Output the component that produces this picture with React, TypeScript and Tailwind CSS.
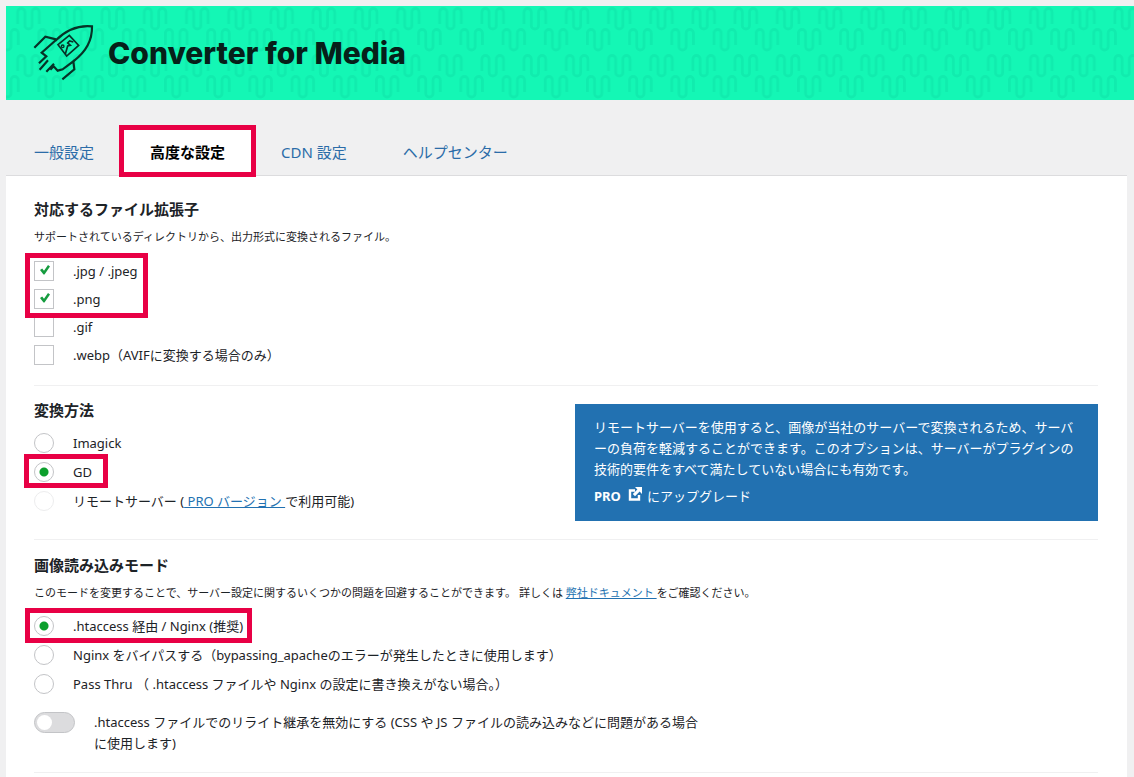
import { useState } from "react";
import type { ReactNode } from "react";

const tabs = ["一般設定", "高度な設定", "CDN 設定", "ヘルプセンター"];

const extensions = [
  { id: "jpg", label: ".jpg / .jpeg" },
  { id: "png", label: ".png" },
  { id: "gif", label: ".gif" },
  { id: "webp", label: ".webp（AVIFに変換する場合のみ）" },
];

const wave =
  "M11.7 18V6.1a3.6 3.6 0 0 1 7.2 0V19.4a3.6 3.6 0 0 0 7.2 0V6.1a3.6 3.6 0 0 1 7.2 0V18";

function Waves() {
  return (
    <svg className="absolute inset-0 h-full w-full" aria-hidden="true">
      <defs>
        <pattern id="waves" width="42.2" height="47" patternUnits="userSpaceOnUse">
          <g fill="none" stroke="#11ecae" strokeWidth="2.8">
            <path d={wave} />
            <path d={wave} transform="translate(21.1 21)" />
            <path d={wave} transform="translate(-21.1 21)" />
          </g>
        </pattern>
      </defs>
      <rect width="100%" height="100%" fill="url(#waves)" />
    </svg>
  );
}

function Rocket() {
  return (
    <svg
      className="h-[66px] w-[66px]"
      viewBox="0 0 198 198"
      fill="none"
      stroke="#063327"
      strokeWidth="6.5"
      aria-hidden="true"
    >
      <path d="M76 62C108 30 148 15 186 19C187 58 168 96 130 124" />
      <path d="M13 83L46 50L78 58" />
      <path d="M78 60L35 98L49 109L27 130" />
      <path d="M54 121L29 149M72 131L49 155" />
      <path d="M61 149L71 139L83 152L98 148L130 124L133 148L97 178" />
      <path d="M84 74L118 46L146 76L110 108Z" strokeWidth="5" />
      <circle cx="98" cy="79" r="4" strokeWidth="4" />
      <path d="M106 102L113 78L121 76L113 69L119 63L130 66" strokeWidth="5" />
    </svg>
  );
}

function ExternalIcon() {
  return (
    <svg className="mr-1 ml-1.5 inline h-4 w-4 align-[-1px]" viewBox="0 0 16 16" aria-hidden="true">
      <path d="M8 4.500H3V13.500H12V9" fill="none" stroke="white" strokeWidth="2.4" />
      <path d="M8 1h7v7l-2.400-2.400L8 10.200 5.800 8l4.600-4.600z" fill="white" />
    </svg>
  );
}

// pink frame drawn over the controls that matter
function Frame({ className }: { className: string }) {
  return (
    <span
      className={`pointer-events-none absolute z-10 border-5 border-[#e80045] ${className}`}
    />
  );
}

function Section({ title, children }: { title: string; children: ReactNode }) {
  return (
    <section className="border-b border-[#f0f0f1]">
      <h2 className="text-[15px] leading-6 font-bold">{title}</h2>
      {children}
    </section>
  );
}

function RadioRow({
  name,
  value,
  current,
  onSelect,
  disabled,
  frame,
  children,
}: {
  name: string;
  value: string;
  current: string;
  onSelect: (value: string) => void;
  disabled?: boolean;
  frame?: string;
  children: ReactNode;
}) {
  return (
    <div className="relative flex h-[29px] w-fit items-center">
      <input
        id={value}
        type="radio"
        name={name}
        checked={current === value}
        disabled={disabled}
        onChange={() => onSelect(value)}
        className="h-5 w-5 shrink-0 appearance-none rounded-full border border-[#c3c4c7] bg-white checked:bg-[radial-gradient(circle,#0c9f2c_4px,white_5px)] disabled:opacity-30"
      />
      <label htmlFor={value} className="pl-[19px]">
        {children}
      </label>
      {frame && <Frame className={frame} />}
    </div>
  );
}

export default function App() {
  const [tab, setTab] = useState("高度な設定");
  const [checked, setChecked] = useState(["jpg", "png"]);
  const [method, setMethod] = useState("gd");
  const [mode, setMode] = useState("htaccess");
  const [rewrite, setRewrite] = useState(false);

  const toggle = (id: string) =>
    setChecked((list) =>
      list.includes(id) ? list.filter((item) => item !== id) : [...list, id]
    );

  return (
    <div
      lang="ja"
      className="min-h-screen bg-[#f0f0f1] pt-1.5 pl-1.5 font-['Noto_Sans','Noto_Sans_CJK_JP',sans-serif] text-[13px] leading-5 text-[#1d2327]"
    >
      <header className="relative flex h-[94px] items-center gap-3 bg-[#14f7b5] px-6">
        <Waves />
        <div className="relative">
          <Rocket />
        </div>
        <h1 className="relative font-['Inter',sans-serif] text-[30px] font-extrabold text-[#062019]">
          Converter for Media
        </h1>
      </header>

      <div className="mr-[7px] pt-7">
        <nav className="flex">
          {tabs.map((name) => (
            <button
              key={name}
              type="button"
              onClick={() => setTab(name)}
              className={`relative h-[47px] px-7 text-[15px] ${
                name === tab ? "bg-white font-bold text-black" : "text-[#2b6ca8]"
              }`}
            >
              {name}
              {name === tab && <Frame className="-inset-x-[3px] -top-[3px] -bottom-0.5" />}
            </button>
          ))}
        </nav>

        <main className="border-t border-[#dcdcde] bg-white pt-[21px] pr-[29px] pl-7">
          <Section title="対応するファイル拡張子">
            <p className="mt-1.5 text-[11px]">
              サポートされているディレクトリから、出力形式に変換されるファイル。
            </p>
            <div className="relative mt-2.5 mb-4 w-fit">
              {extensions.map(({ id, label }) => (
                <div key={id} className="flex h-7 items-center">
                  <span className="relative flex">
                    <input
                      id={id}
                      type="checkbox"
                      checked={checked.includes(id)}
                      onChange={() => toggle(id)}
                      className="h-5 w-5 appearance-none border border-[#c3c4c7] bg-white"
                    />
                    {checked.includes(id) && (
                      <svg
                        className="pointer-events-none absolute top-1 left-1.5 h-2.5 w-2.5"
                        viewBox="0 0 10 10"
                        aria-hidden="true"
                      >
                        <path d="M0 5l2.2-1.4L4 5.800 8 0l2 1.400L4.500 9.500H3.500z" fill="#169c3f" />
                      </svg>
                    )}
                  </span>
                  <label htmlFor={id} className="pl-[19px]">
                    {label}
                  </label>
                </div>
              ))}
              <Frame className="-top-1 -left-[9px] h-[65px] w-[123px]" />
            </div>
          </Section>

          <div className="flex items-start justify-between border-b border-[#f0f0f1] pt-3 pb-[18px]">
            <div>
              <h2 className="text-[15px] leading-6 font-bold">変換方法</h2>
              <div className="mt-1.5">
                <RadioRow name="method" value="imagick" current={method} onSelect={setMethod}>
                  Imagick
                </RadioRow>
                <RadioRow
                  name="method"
                  value="gd"
                  current={method}
                  onSelect={setMethod}
                  frame="-left-2.5 -right-4 -top-[3px] -bottom-0.5"
                >
                  GD
                </RadioRow>
                <RadioRow
                  name="method"
                  value="remote"
                  current={method}
                  onSelect={setMethod}
                  disabled
                >
                  リモートサーバー (
                  <a href="#pro" className="text-[#2271b1] underline">
                    &nbsp;PRO バージョン&nbsp;
                  </a>
                  で利用可能)
                </RadioRow>
              </div>
            </div>
            <aside className="mt-1.5 w-[523px] bg-[#2271b1] px-[19px] pt-[13px] pb-[15px] text-white">
              <p className="leading-[21px] [line-break:anywhere]">
                リモートサーバーを使用すると、画像が当社のサーバーで変換されるため、サーバーの負荷を軽減することができます。このオプションは、サーバーがプラグインの技術的要件をすべて満たしていない場合にも有効です。
              </p>
              <a href="#upgrade" className="mt-1.5 block">
                <b>PRO</b>
                <ExternalIcon />
                にアップグレード
              </a>
            </aside>
          </div>

          <div className="pt-[13px]">
            <Section title="画像読み込みモード">
              <p className="mt-1.5 text-[11px]">
                このモードを変更することで、サーバー設定に関するいくつかの問題を回避することができます。
                詳しくは{" "}
                <a href="#docs" className="text-[#2271b1] underline">
                  弊社ドキュメント&nbsp;
                </a>
                をご確認ください。
              </p>
              <div className="mt-2">
                <RadioRow
                  name="mode"
                  value="htaccess"
                  current={mode}
                  onSelect={setMode}
                  frame="-left-[9px] -right-[9px] -top-[3px] -bottom-[3px]"
                >
                  .htaccess 経由 / Nginx (推奨)
                </RadioRow>
                <RadioRow name="mode" value="bypass" current={mode} onSelect={setMode}>
                  Nginx をバイパスする（bypassing_apacheのエラーが発生したときに使用します）
                </RadioRow>
                <RadioRow name="mode" value="passthru" current={mode} onSelect={setMode}>
                  Pass Thru （ .htaccess ファイルや Nginx の設定に書き換えがない場合。）
                </RadioRow>
              </div>
              <div className="mt-3.5 mb-[18px] flex items-start">
                <span className="relative flex">
                  <input
                    id="rewrite"
                    type="checkbox"
                    role="switch"
                    checked={rewrite}
                    onChange={() => setRewrite(!rewrite)}
                    className="peer h-[21px] w-[41px] appearance-none rounded-full border border-[#c3c4c7] bg-[#dcdcde] checked:bg-[#0c9f2c]"
                  />
                  <span className="pointer-events-none absolute top-[3px] left-[3px] h-[15px] w-[15px] rounded-full bg-white peer-checked:left-[23px]" />
                </span>
                <label htmlFor="rewrite" className="max-w-[632px] pl-[19px] leading-[21px]">
                  .htaccess ファイルでのリライト継承を無効にする (CSS や JS
                  ファイルの読み込みなどに問題がある場合に使用します)
                </label>
              </div>
            </Section>
          </div>
          <div className="h-6" />
        </main>
      </div>
    </div>
  );
}
